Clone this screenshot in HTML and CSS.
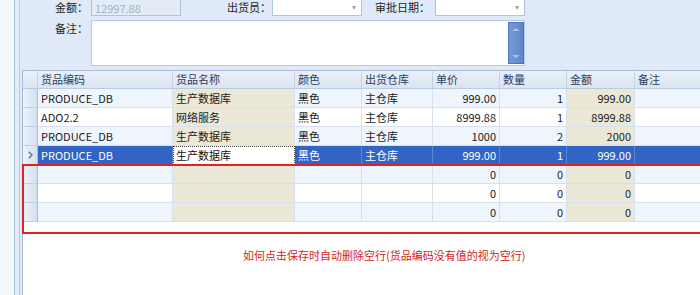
FILE: index.html
```html
<!DOCTYPE html>
<html lang="zh-CN">
<head>
    <meta charset="UTF-8">
    <meta name="viewport" content="width=device-width, initial-scale=1.0">
    <title>出货单</title>
    <link rel="stylesheet" href="styles.css">
</head>
<body>
    <div class="window">
        <div class="side"></div>
        <div class="gutter"></div>
        <div class="main">
            <div class="form">
                <div class="form-row first">
                    <span class="lbl w68">金额：</span>
                    <div class="field disabled">12997.88</div>
                    <span class="lbl w90">出货员：</span>
                    <div class="field combo"><span class="arrow">▾</span></div>
                    <span class="lbl w68 gap5">审批日期：</span>
                    <div class="field combo"><span class="arrow">▾</span></div>
                </div>
                <div class="form-row">
                    <span class="lbl w68 top">备注：</span>
                    <div class="memo">
                        <div class="memo-text"></div>
                        <div class="memo-scroll">
                            <span class="tri up"></span>
                            <span class="tri down"></span>
                        </div>
                    </div>
                </div>
            </div>

            <div class="grid-wrap">
                <div class="grid">
                    <div class="row head">
                        <div class="rh"></div>
                        <div class="c">货品编码</div>
                        <div class="c">货品名称</div>
                        <div class="c">颜色</div>
                        <div class="c">出货仓库</div>
                        <div class="c">单价</div>
                        <div class="c">数量</div>
                        <div class="c">金额</div>
                        <div class="c">备注</div>
                    </div>
                    <div class="row alt">
                        <div class="rh"></div>
                        <div class="c">PRODUCE_DB</div>
                        <div class="c ro">生产数据库</div>
                        <div class="c">黑色</div>
                        <div class="c">主仓库</div>
                        <div class="c num">999.00</div>
                        <div class="c num">1</div>
                        <div class="c num ro">999.00</div>
                        <div class="c"></div>
                    </div>
                    <div class="row">
                        <div class="rh"></div>
                        <div class="c">ADO2.2</div>
                        <div class="c ro">网络服务</div>
                        <div class="c">黑色</div>
                        <div class="c">主仓库</div>
                        <div class="c num">8999.88</div>
                        <div class="c num">1</div>
                        <div class="c num ro">8999.88</div>
                        <div class="c"></div>
                    </div>
                    <div class="row alt">
                        <div class="rh"></div>
                        <div class="c">PRODUCE_DB</div>
                        <div class="c ro">生产数据库</div>
                        <div class="c">黑色</div>
                        <div class="c">主仓库</div>
                        <div class="c num">1000</div>
                        <div class="c num">2</div>
                        <div class="c num ro">2000</div>
                        <div class="c"></div>
                    </div>
                    <div class="row sel">
                        <div class="rh">
                            <svg width="5" height="8" viewBox="0 0 5 8"><polyline points="0.8,0.8 4,4 0.8,7.2" fill="none" stroke="#51709e" stroke-width="1.3"/></svg>
                        </div>
                        <div class="c">PRODUCE_DB</div>
                        <div class="c focus">生产数据库</div>
                        <div class="c">黑色</div>
                        <div class="c">主仓库</div>
                        <div class="c num">999.00</div>
                        <div class="c num">1</div>
                        <div class="c num">999.00</div>
                        <div class="c"></div>
                    </div>
                    <div class="row alt">
                        <div class="rh"></div>
                        <div class="c"></div>
                        <div class="c ro"></div>
                        <div class="c"></div>
                        <div class="c"></div>
                        <div class="c num">0</div>
                        <div class="c num">0</div>
                        <div class="c num ro">0</div>
                        <div class="c"></div>
                    </div>
                    <div class="row">
                        <div class="rh"></div>
                        <div class="c"></div>
                        <div class="c ro"></div>
                        <div class="c"></div>
                        <div class="c"></div>
                        <div class="c num">0</div>
                        <div class="c num">0</div>
                        <div class="c num ro">0</div>
                        <div class="c"></div>
                    </div>
                    <div class="row alt">
                        <div class="rh"></div>
                        <div class="c"></div>
                        <div class="c ro"></div>
                        <div class="c"></div>
                        <div class="c"></div>
                        <div class="c num">0</div>
                        <div class="c num">0</div>
                        <div class="c num ro">0</div>
                        <div class="c"></div>
                    </div>
                </div>

                <!-- annotation box round the empty rows -->
                <div class="mark"></div>

                <p class="note">如何点击保存时自动删除空行(货品编码没有值的视为空行)</p>
            </div>
        </div>
    </div>
</body>
</html>
```

FILE: styles.css
```css
body {
    margin: 0;
    padding: 0;
    font-family: "Noto Sans CJK SC", sans-serif;
    font-size: 11px;
    color: #1b1b1b;
    background-color: #fff;
    overflow: hidden;
}

.window {
    display: flex;
    width: 700px;
    height: 295px;
    overflow: hidden;
}

.side {
    width: 14px;
    flex-shrink: 0;
    background-color: #f5f8fc;
    border-right: 1px solid #a9bfdc;
}

.gutter {
    width: 4px;
    flex-shrink: 0;
    background-color: #e4ecf8;
    border-right: 1px solid #b8cae3;
}

.main {
    flex: 1;
    display: flex;
    flex-direction: column;
    background-color: #dfe9f7;
    min-width: 0;
}

/* top form */

.form {
    height: 70px;
    flex-shrink: 0;
    display: flex;
    flex-direction: column;
    gap: 4px;
}

.form-row {
    display: flex;
    align-items: center;
}

.form-row.first {
    margin-top: -4px;
    align-items: flex-end;
}

.lbl {
    text-align: right;
    flex-shrink: 0;
    color: #1e1e1e;
    margin-right: 3px;
}

.form-row.first .lbl {
    line-height: 14px;
    margin-bottom: 2px;
}

.w68 { width: 68px; }
.w90 { width: 90px; margin-right: 1px; }
.gap5 { margin-right: 5px; }

.lbl.top {
    align-self: flex-start;
    margin-top: 0;
}

.field {
    position: relative;
    width: 90px;
    height: 20px;
    box-sizing: border-box;
    border: 1px solid #b3c3da;
    background-color: #fff;
    padding: 4px 3px 0;
    line-height: 14px;
}

.field.disabled {
    background-color: #e3ebf7;
    color: #a3b1c5;
}

.arrow {
    position: absolute;
    right: 5px;
    top: 3px;
    font-size: 8px;
    color: #9aa4b2;
}

.memo {
    display: flex;
    width: 434px;
    height: 46px;
    box-sizing: border-box;
    border: 1px solid #b9c9df;
    background-color: #fff;
}

.memo-text {
    flex: 1;
}

.memo-scroll {
    width: 16px;
    margin: 1px 0;
    box-sizing: border-box;
    border: 1px solid #4d75b8;
    background: linear-gradient(to right, #7599d4, #5f87c9);
    display: flex;
    flex-direction: column;
    justify-content: space-between;
    align-items: center;
    padding: 5px 0;
}

.tri {
    width: 0;
    height: 0;
    border-left: 4px solid transparent;
    border-right: 4px solid transparent;
}

.tri.up {
    border-bottom: 3px solid #a9c1e8;
}

.tri.down {
    border-top: 3px solid #a9c1e8;
}

/* grid */

.grid-wrap {
    position: relative;
    flex: 1;
    margin-left: 2px;
    background-color: #fff;
    border-left: 1px solid #a8bcd8;
    border-top: 1px solid #a8bcd8;
}

.row {
    display: grid;
    grid-template-columns: 15px 135px 122px 67px 71px 67px 67px 68px 80px;
    height: 19px;
    background-color: #fff;
}

.row.alt {
    background-color: #eff5fc;
}

.row .c,
.row .rh {
    box-sizing: border-box;
    height: 19px;
    line-height: 18px;
    border-right: 1px solid #d6e0ee;
    border-bottom: 1px solid #d6e0ee;
    padding: 0 3px;
    white-space: nowrap;
    overflow: hidden;
}

.row .rh {
    padding: 0;
    background: linear-gradient(to right, #eef3fa, #d4e0f1);
    border-right: 1px solid #a9bedb;
    border-bottom: 1px solid #c2d0e5;
    display: flex;
    align-items: center;
    justify-content: center;
}

.row.head {
    height: 18px;
}

.row.head .c,
.row.head .rh {
    height: 18px;
    line-height: 17px;
    background: linear-gradient(#eaf0f9, #dae4f2);
    color: #2a3f60;
    border-right: 1px solid #c3d2e7;
    border-bottom: 1px solid #b9cbe3;
}

.c.num {
    text-align: right;
}

.c.ro {
    background-color: #ece8d8;
}

.row.sel {
    background-color: #3164c5;
    color: #fff;
}

.row.sel .c {
    border-right-color: #5d84cf;
    border-bottom-color: #2b58b0;
}

.row.sel .c.focus {
    background-color: #fff;
    color: #111;
    border: 1px dotted #444;
    line-height: 16px;
    padding-left: 2px;
}

.mark {
    position: absolute;
    left: -1px;
    top: 93px;
    width: 700px;
    height: 70px;
    box-sizing: border-box;
    border: 2px solid #df2323;
}

.note {
    margin: 26px 0 0 220px;
    color: #d42222;
    line-height: 14px;
}
```
